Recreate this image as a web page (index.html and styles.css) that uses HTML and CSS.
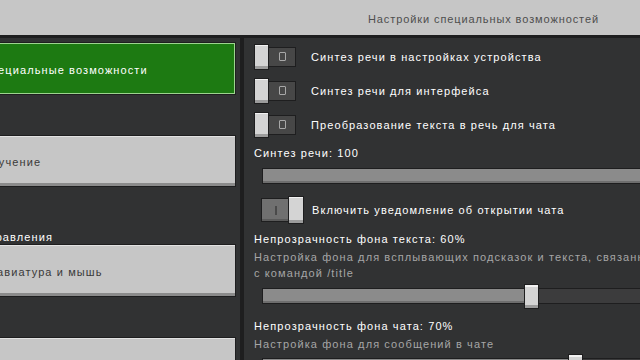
FILE: index.html
```html
<!DOCTYPE html>
<html>
<head>
    <link rel="stylesheet" href="styles.css">
</head>
<body>
    <header class="topbar">
        <span class="title">Настройки специальных возможностей</span>
    </header>

    <div class="main">
        <nav class="sidebar">
            <div class="nav-inner">
                <button class="nav-btn active">Специальные возможности</button>
                <button class="nav-btn">Обучение</button>
                <div class="nav-label">Управления</div>
                <button class="nav-btn">Клавиатура и мышь</button>
                <button class="nav-btn">Сенсорный экран</button>
            </div>
        </nav>
        <div class="divider"></div>

        <div class="settings">
            <div class="toggle-row">
                <span class="toggle">
                    <span class="knob"></span>
                    <span class="track"><span class="mark-off"></span></span>
                </span>
                <span class="toggle-text">Синтез речи в настройках устройства</span>
            </div>
            <div class="toggle-row">
                <span class="toggle">
                    <span class="knob"></span>
                    <span class="track"><span class="mark-off"></span></span>
                </span>
                <span class="toggle-text">Синтез речи для интерфейса</span>
            </div>
            <div class="toggle-row">
                <span class="toggle">
                    <span class="knob"></span>
                    <span class="track"><span class="mark-off"></span></span>
                </span>
                <span class="toggle-text">Преобразование текста в речь для чата</span>
            </div>

            <div class="label">Синтез речи: 100</div>
            <div class="slider">
                <div class="slider-fill" style="width: 100%"></div>
            </div>

            <div class="toggle-row on-row">
                <span class="toggle on">
                    <span class="track"><span class="mark-on"></span></span>
                    <span class="knob"></span>
                </span>
                <span class="toggle-text">Включить уведомление об открытии чата</span>
            </div>

            <div class="label spaced">Непрозрачность фона текста: 60%</div>
            <div class="desc">Настройка фона для всплывающих подсказок и текста, связанных<br>с командой /title</div>
            <div class="slider">
                <div class="slider-fill" style="width: 60%"></div>
                <span class="slider-knob" style="left: 60%"></span>
            </div>

            <div class="label spaced-lg">Непрозрачность фона чата: 70%</div>
            <div class="desc">Настройка фона для сообщений в чате</div>
            <div class="slider last">
                <div class="slider-fill" style="width: 70%"></div>
                <span class="slider-knob" style="left: 70%"></span>
            </div>
        </div>
    </div>
</body>
</html>
```

FILE: styles.css
```css
body {
    margin: 0;
    width: 640px;
    height: 360px;
    overflow: hidden;
    background-color: #313233;
    font-family: "Liberation Sans", Arial, sans-serif;
    font-size: 11px;
    letter-spacing: 1.1px;
    color: #fff;
}
.topbar {
    height: 38px;
    box-sizing: border-box;
    background-color: #c6c6c6;
    border-bottom: 3px solid #1e1e1f;
    display: flex;
    align-items: center;
    padding-left: 368px;
    padding-top: 2px;
}
.title {
    color: #4e4e4e;
    letter-spacing: 0.9px;
}
.main {
    display: flex;
    height: 322px;
}
.sidebar {
    width: 240px;
    overflow: hidden;
    padding-top: 4px;
}
.nav-inner {
    margin-left: -25px;
    width: 261px;
    display: flex;
    flex-direction: column;
}
.nav-btn {
    height: 53px;
    margin-bottom: 40px;
    padding: 2px 0 0 6px;
    text-align: left;
    font-family: inherit;
    font-size: 11px;
    letter-spacing: 1.1px;
    color: #3a3a3a;
    background-color: #c6c6c6;
    border: 1px solid #1e1e1f;
    box-shadow: inset 0 -3px 0 #8b8b8b, inset 0 1px 0 #e2e2e2;
}
.nav-btn.active {
    color: #fff;
    background-color: #1d7a12;
    box-shadow: inset 0 0 0 1px #9dd48f;
}
.nav-btn:nth-of-type(2) {
    margin-bottom: 0;
    height: 52px;
}
.nav-label {
    margin-top: 43px;
    line-height: 14px;
    padding-left: 6px;
}
.divider {
    width: 4px;
    background-color: #1e1e1f;
}
.settings {
    flex: 1;
    overflow: hidden;
    padding: 6px 0 0 10px;
    display: flex;
    flex-direction: column;
}
.toggle-row {
    display: flex;
    align-items: center;
    height: 25px;
    margin-bottom: 9px;
}
.toggle {
    display: flex;
    align-items: center;
}
.knob {
    width: 13px;
    height: 24px;
    background-color: #d4d4d4;
    border: 1px solid #1e1e1f;
    box-shadow: inset 0 -3px 0 #9c9c9c, inset 0 1px 0 #f2f2f2;
    position: relative;
    z-index: 1;
}
.track {
    width: 26px;
    height: 18px;
    margin-left: -1px;
    background-color: #474747;
    border: 1px solid #1e1e1f;
    display: flex;
    align-items: center;
    justify-content: center;
}
.mark-off {
    width: 5px;
    height: 7px;
    border: 1px solid #a8a8a8;
    border-radius: 1px;
}
.toggle-text {
    margin-left: 15px;
}
.on-row {
    height: 28px;
    margin-top: 12px;
    margin-bottom: 0;
}
.toggle.on {
    margin-left: 7px;
}
.toggle.on .track {
    width: 27px;
    height: 22px;
    margin-left: 0;
    margin-right: -2px;
    background-color: #707070;
    box-shadow: inset 0 -2px 0 #5a5a5a;
}
.toggle.on .knob {
    width: 14px;
    height: 26px;
}
.toggle.on + .toggle-text {
    margin-left: 8px;
}
.mark-on {
    width: 2px;
    height: 9px;
    background-color: #4a4a4a;
}
.label {
    line-height: 14px;
}
.label.spaced {
    margin-top: 8px;
}
.label.spaced-lg {
    margin-top: 15px;
}
.desc {
    margin-top: 3px;
    line-height: 16px;
    color: #a6a6a6;
    white-space: nowrap;
}
.slider {
    position: relative;
    margin: 8px 0 0 8px;
    width: 446px;
    height: 14px;
    flex-shrink: 0;
    background-color: #3c3c3d;
    border: 1px solid #1e1e1f;
}
.slider-fill {
    height: 100%;
    background-color: #8b8b8b;
    box-shadow: inset 0 -2px 0 #6e6e6e;
}
.desc + .slider {
    margin-top: 7px;
}
.slider.last {
    margin-top: 6px;
}
.slider-knob {
    position: absolute;
    top: -5px;
    width: 13px;
    height: 23px;
    margin-left: -7px;
    background-color: #d4d4d4;
    border: 1px solid #1e1e1f;
    box-shadow: inset 0 -3px 0 #9c9c9c, inset 0 2px 0 #f2f2f2;
}
```
